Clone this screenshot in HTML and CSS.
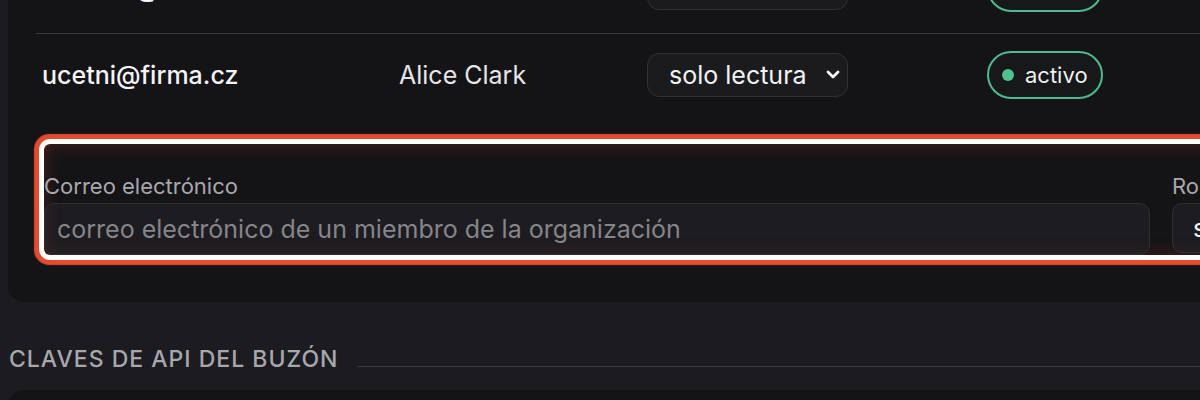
FILE: index.html
```html
<!DOCTYPE html>
<html lang="es">
<head>
<meta charset="utf-8">
<title>Miembros</title>
<link rel="stylesheet" href="styles.css">
</head>
<body>
<div class="page">
  <section class="card members">
    <div class="rows">
      <div class="row first">
        <div class="cell email">director@firma.cz</div>
        <div class="cell name">Bob Martin</div>
        <div class="cell">
          <div class="select">
            <span>administrador</span>
            <svg class="chev" viewBox="0 0 14 10" width="14" height="10"><path d="M2 2 L7 7 L12 2" fill="none" stroke="currentColor" stroke-width="2.8" stroke-linecap="round" stroke-linejoin="round"/></svg>
          </div>
        </div>
        <div class="cell">
          <span class="badge"><span class="dot"></span>activo</span>
        </div>
      </div>
      <div class="row last">
        <div class="cell email">ucetni@firma.cz</div>
        <div class="cell name">Alice Clark</div>
        <div class="cell">
          <div class="select">
            <span>solo lectura</span>
            <svg class="chev" viewBox="0 0 14 10" width="14" height="10"><path d="M2 2 L7 7 L12 2" fill="none" stroke="currentColor" stroke-width="2.8" stroke-linecap="round" stroke-linejoin="round"/></svg>
          </div>
        </div>
        <div class="cell">
          <span class="badge"><span class="dot"></span>activo</span>
        </div>
      </div>
    </div>

    <form class="invite">
      <label class="field">
        <span class="label">Correo electrónico</span>
        <span class="input placeholder">correo electrónico de un miembro de la organización</span>
      </label>
      <label class="field role">
        <span class="label">Rol</span>
        <span class="input value">solo lectura</span>
      </label>
    </form>
  </section>

  <h2 class="section-title"><span>Claves de API del buzón</span><span class="rule"></span></h2>

  <section class="card next"></section>
</div>
</body>
</html>
```

FILE: styles.css
```css
html, body {
  margin: 0;
  padding: 0;
  overflow: hidden;
}

body {
  background: #1c1c20;
  font-family: "Inter", "Liberation Sans", sans-serif;
  color: #ececee;
  width: 1200px;
  height: 400px;
}

.page {
  padding-left: 8px;
  width: 1600px;
}

.card {
  background: #141316;
  border-radius: 16px;
}

.members {
  margin-top: -53px;
  padding: 0 28px 47px 28px;
}

.row {
  display: grid;
  grid-template-columns: 357px 248px 340px 1fr;
  align-items: center;
  padding: 17px 0;
  border-bottom: 1px solid #37373c;
  min-height: 48px;
}

.row.first {
  padding-bottom: 21px;
}

.row.last {
  border-bottom: none;
}

.cell {
  padding-left: 6px;
  font-size: 25px;
  line-height: 30px;
}

.email {
  font-weight: 500;
  color: #f4f4f6;
}

.name {
  color: #e6e6e9;
}

.select {
  display: flex;
  align-items: center;
  justify-content: space-between;
  box-sizing: border-box;
  width: 201px;
  height: 44px;
  padding: 0 7px 0 21px;
  border: 1px solid #323236;
  border-radius: 12px;
  background: #1b1b1e;
  color: #f2f2f4;
  font-size: 25px;
}

.chev {
  color: #f4f4f6;
}

.badge {
  display: inline-flex;
  align-items: center;
  box-sizing: border-box;
  height: 48px;
  padding: 0 13px 0 13px;
  border: 2px solid #4dbb8c;
  border-radius: 24px;
  background: #17181a;
  font-size: 22px;
  color: #f0f0f2;
  gap: 11px;
}

.dot {
  width: 12px;
  height: 12px;
  border-radius: 50%;
  background: #4fc08e;
}

.invite {
  display: grid;
  grid-template-columns: 1106px 260px;
  column-gap: 22px;
  margin: 28px 0 0 8px;
  padding-top: 29px;
  border-radius: 6px;
  box-shadow:
    inset 0 0 18px rgba(210, 70, 45, 0.3),
    0 0 0 5px #ffffff,
    0 0 1px 10px #e24b2e;
}

.field {
  display: flex;
  flex-direction: column;
}

.label {
  font-size: 22px;
  line-height: 26px;
  color: #a8a8ad;
  margin-bottom: 4px;
}

.input {
  display: flex;
  align-items: center;
  box-sizing: border-box;
  height: 52px;
  padding: 0 12px;
  border: 1px solid #2f2e33;
  border-radius: 10px;
  background: rgba(40, 40, 46, 0.45);
  font-size: 25px;
}

.placeholder {
  color: #85858a;
}

.role .input {
  height: 50px;
  padding-left: 20px;
}

.value {
  color: #f2f2f4;
}

.section-title {
  display: flex;
  align-items: flex-end;
  gap: 20px;
  margin: 43px 0 17px 1px;
  font-size: 23px;
  line-height: 28px;
  font-weight: 500;
  letter-spacing: 1px;
  text-transform: uppercase;
  color: #a7a7ae;
}

.section-title .rule {
  flex: 1;
  height: 0;
  border-top: 1px solid #3a3a3f;
  margin-bottom: 6px;
}

.next {
  height: 80px;
}
```
